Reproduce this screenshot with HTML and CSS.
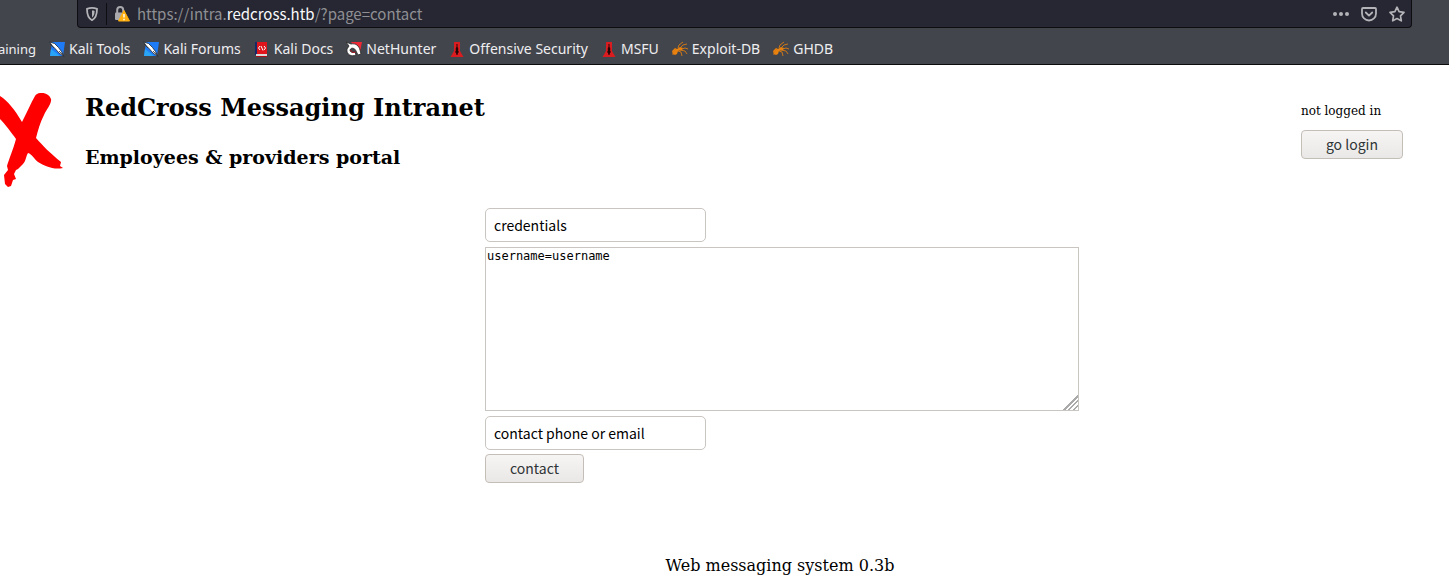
FILE: index.html
```html
<!DOCTYPE html>
<html lang="en">
<head>
<meta charset="utf-8">
<title>RedCross Messaging Intranet</title>
<link rel="stylesheet" href="styles.css">
</head>
<body>
<svg class="defs" aria-hidden="true">
  <symbol id="kali" viewBox="0 0 16 16">
    <path d="M3 1h13l-2 14H1z" fill="#1f7bf5"/><path d="M2 8l9 7H1z" fill="#2aa4f5"/>
    <path d="M.5 1l5 1.500 4 4 3 4 2.500 5-5-3.500-3.500-4L3.500 5z" fill="#fff" stroke="#20242b" stroke-width=".8"/>
    <path d="M1 3l4 4M10 10l4 4" stroke="#333" stroke-width=".8"/>
  </symbol>
  <symbol id="docs" viewBox="0 0 16 16">
    <path d="M1 1h3v13H1z" fill="#172a67"/><path d="M3 1h10v12H3z" fill="#df151b"/><path d="M2 13h11v2H2z" fill="#dadada"/><path d="M2 15h11v1H2z" fill="#a90f15"/>
    <path d="M6 5L4.500 7 6 9M10 5l1.500 2L10 9M7 5L9 9.500" fill="none" stroke="#fff"/>
  </symbol>
  <symbol id="hunter" viewBox="0 0 16 16">
    <path d="M5 1h11l-2 10-6-6z" fill="#ee2935"/>
    <path d="M0 1l5 2c5-1 8 2 9 6l1 4-3 1-2-4c-1-3-5-4-6-1 0 2 2 3 5 2l1 3c-4 2-10 0-9-6l2-3z" fill="#fff" stroke="#252525" stroke-width=".8"/>
    <path d="M4.500 9c1 2.500 3 3 5 2" fill="none" stroke="#b5121a"/>
  </symbol>
  <symbol id="tower" viewBox="0 0 16 16">
    <path d="M5 1h6v9l3.500 6h-13L5 10z" fill="#d91c20"/>
    <path d="M7.500 3h1v3l.7 1v3l.8 1-1 1-.5 2h-1L7 12l-1-1 .8-1V7l.7-1z" fill="#260506"/>
  </symbol>
  <symbol id="bug" viewBox="0 0 16 16">
    <path d="M0 10l3-3 2 1 3-2 3 1-1 2-4 1-1 3-2 1-2-1z" fill="#e8810d"/>
    <path d="M6 7L7 4l4-3M8 7l3-3 4-1M10 8l3-1 3 1M8 9l5 1 2 3M6 10l3 1 1 4M4 8L1 11v3" fill="none" stroke="#d97b12" stroke-width=".9"/>
  </symbol>
</svg>

<header class="browser">
  <div class="urlbar">
    <span class="shield"><svg width="14" height="16" viewBox="0 0 14 16"><path d="M7 1.800c2 0 3.500.4 5 1C12 8 11.500 12 7 14.200 2.500 12 2 8 2 2.800c1.500-.6 3-1 5-1z" fill="none" stroke="#b3b3b8" stroke-width="1.800"/><path d="M7 4.500c1 0 2 .2 2.600.4C9.500 8 9 10 7 11.400z" fill="#b3b3b8"/></svg></span>
    <svg class="lock" width="16" height="16" viewBox="0 0 16 16"><path d="M3.200 7V4a3 3 0 0 1 6 0v2" fill="none" stroke="#a9a9ad" stroke-width="2"/><rect x="1" y="6.500" width="10" height="7.500" rx="1" fill="#a9a9ad"/><path d="M10 4.500L15.500 15h-11z" fill="#ffb010" stroke="#ffb010" stroke-linejoin="round"/><path d="M10 8v3.500M10 12.700v1.500" stroke="#fff" stroke-width="1.400"/></svg>
    <span class="url">https://intra.<span class="domain">redcross.htb</span>/?page=contact</span>
    <span class="actions">
      <svg width="16" height="16" viewBox="0 0 16 16" fill="#b3b3b8"><circle cx="2" cy="8" r="2"/><circle cx="8" cy="8" r="2"/><circle cx="14" cy="8" r="2"/></svg>
      <svg width="16" height="16" viewBox="0 0 16 16" fill="none" stroke="#b3b3b8" stroke-width="1.800" stroke-linecap="round" stroke-linejoin="round"><path d="M2 2h12a1 1 0 0 1 1 1v4.500a7 7 0 0 1-14 0V3a1 1 0 0 1 1-1z"/><path d="M4.800 6.500L8 9.600l3.200-3.100"/></svg>
      <svg width="16" height="16" viewBox="0 0 16 16" fill="none" stroke="#b3b3b8" stroke-width="1.700" stroke-linejoin="round"><path d="M8 1.200l2.100 4.400 4.900.7-3.500 3.500.8 5L8 12.500l-4.300 2.300.8-5L1 6.300l4.900-.7z"/></svg>
    </span>
  </div>
  <nav class="bookmarks">
    <a href="#" class="clipped">aining</a>
    <a href="#"><svg><use href="#kali"/></svg>Kali Tools</a>
    <a href="#"><svg><use href="#kali"/></svg>Kali Forums</a>
    <a href="#"><svg><use href="#docs"/></svg>Kali Docs</a>
    <a href="#"><svg><use href="#hunter"/></svg>NetHunter</a>
    <a href="#"><svg><use href="#tower"/></svg>Offensive Security</a>
    <a href="#"><svg><use href="#tower"/></svg>MSFU</a>
    <a href="#"><svg><use href="#bug"/></svg>Exploit-DB</a>
    <a href="#"><svg><use href="#bug"/></svg>GHDB</a>
  </nav>
</header>

<div class="masthead">
  <svg class="logo" width="64" height="96" viewBox="0 0 64 96" fill="#f00"><path d="M0 3C8 8 15 17 22 29C27 19 31 10 35 3C38-2 49-1 51 6C52 10 47 16 44 22C40 30 38 37 36 45C43 53 50 60 61 69L60 73L63 75C53 77 45 73 38 69C34 66 32 61 28 60C26 63 26 68 23 71L20 74L18 76L16 77L14 81L16 86L13 87L11 93L8 94L5 91L4 82L8 77L7 73C9 66 13 57 16 46C11 39 5 31 0 26Z"/></svg>
  <div class="titles">
    <h1>RedCross Messaging Intranet</h1>
    <h2>Employees &amp; providers portal</h2>
  </div>
  <div class="session">
    <span>not logged in</span>
    <button type="button" class="btn">go login</button>
  </div>
</div>

<main>
  <form class="contact">
    <input type="text" value="credentials" aria-label="Subject">
    <textarea aria-label="Message" spellcheck="false">username=username</textarea>
    <input type="text" value="contact phone or email" aria-label="Contact phone or email">
    <button type="button" class="btn">contact</button>
  </form>
</main>
<footer>Web messaging system 0.3b</footer>
</body>
</html>
```
FILE: styles.css
```css
* { box-sizing: border-box; }
body {
  margin: 0;
  background: #fff;
  color: #000;
  font: 16px/19px "DejaVu Serif", serif;
  overflow-x: hidden;
}
.defs { display: none; }
.browser {
  background: #43454d;
  border-bottom: 1px solid #0c0c0d;
  font: 14px/20px "Noto Sans", sans-serif;
}
.urlbar {
  display: flex;
  align-items: center;
  height: 28px;
  margin: 0 37px 0 77px;
  background: #262732;
  border: 1px solid #0e0e12;
  border-top: 0;
  border-radius: 0 0 4px 4px;
  color: #8f8f94;
}
.url { font-family: "Noto Sans CJK SC", "Noto Sans", sans-serif; font-size: 15px; }
.shield {
  display: flex;
  align-items: center;
  height: 22px;
  padding: 0 7px;
  border-right: 1px solid #0e0e12;
}
.lock { margin: 0 7px; }
.domain { color: #f9f9fa; }
.actions { display: flex; gap: 12px; margin-left: auto; padding-right: 6px; }
.bookmarks {
  display: flex;
  align-items: center;
  gap: 13px;
  height: 36px;
  padding-top: 5px;
}
.bookmarks a {
  display: flex;
  align-items: center;
  gap: 4px;
  color: #eeeef0;
  text-decoration: none;
  white-space: nowrap;
}
.bookmarks .clipped { justify-content: flex-end; width: 36px; font-size: 13px; }
.bookmarks svg { width: 16px; height: 16px; }
.masthead {
  display: flex;
  align-items: flex-start;
  padding: 28px 46px 0 0;
}
.titles { flex: 1; padding: 1px 0 0 21px; }
h1 { margin: 0; font-size: 24px; line-height: 28px; }
h2 { margin: 24px 0 0; font-size: 19px; line-height: 22px; }
.session {
  display: flex;
  flex-direction: column;
  gap: 9px;
  padding-top: 9px;
  font-size: 12px;
}
.btn {
  height: 29px;
  padding: 0 24px 2px;
  border: 1px solid #c4beb8;
  border-radius: 4px;
  background: linear-gradient(#f6f5f4, #eae8e6);
  color: #2e3436;
  font: 14px/20px "Noto Sans CJK SC", "Noto Sans", sans-serif;
}
main {
  display: flex;
  justify-content: center;
  padding: 19px 0 0 115px;
}
.contact {
  display: flex;
  flex-direction: column;
  align-items: flex-start;
  width: 594px;
}
.contact input {
  width: 221px;
  height: 34px;
  padding: 0 8px;
  border: 1px solid #c9c5c0;
  border-radius: 5px;
  font: 14px/20px "Noto Sans CJK SC", "Noto Sans", sans-serif;
}
.contact textarea {
  width: 100%;
  height: 164px;
  margin: 5px 0;
  padding: 1px;
  border: 1px solid #c9c5c0;
  font: 12px/15px "DejaVu Sans Mono", monospace;
}
.contact textarea::-webkit-resizer {
  background: linear-gradient(135deg, transparent 50%, #aaa 50% 57%, transparent 57% 66%, #aaa 66% 73%, transparent 73% 82%, #aaa 82% 90%, transparent 90%);
}
.contact .btn { margin-top: 4px; }
footer { padding: 73px 0 8px 111px; text-align: center; }
```
